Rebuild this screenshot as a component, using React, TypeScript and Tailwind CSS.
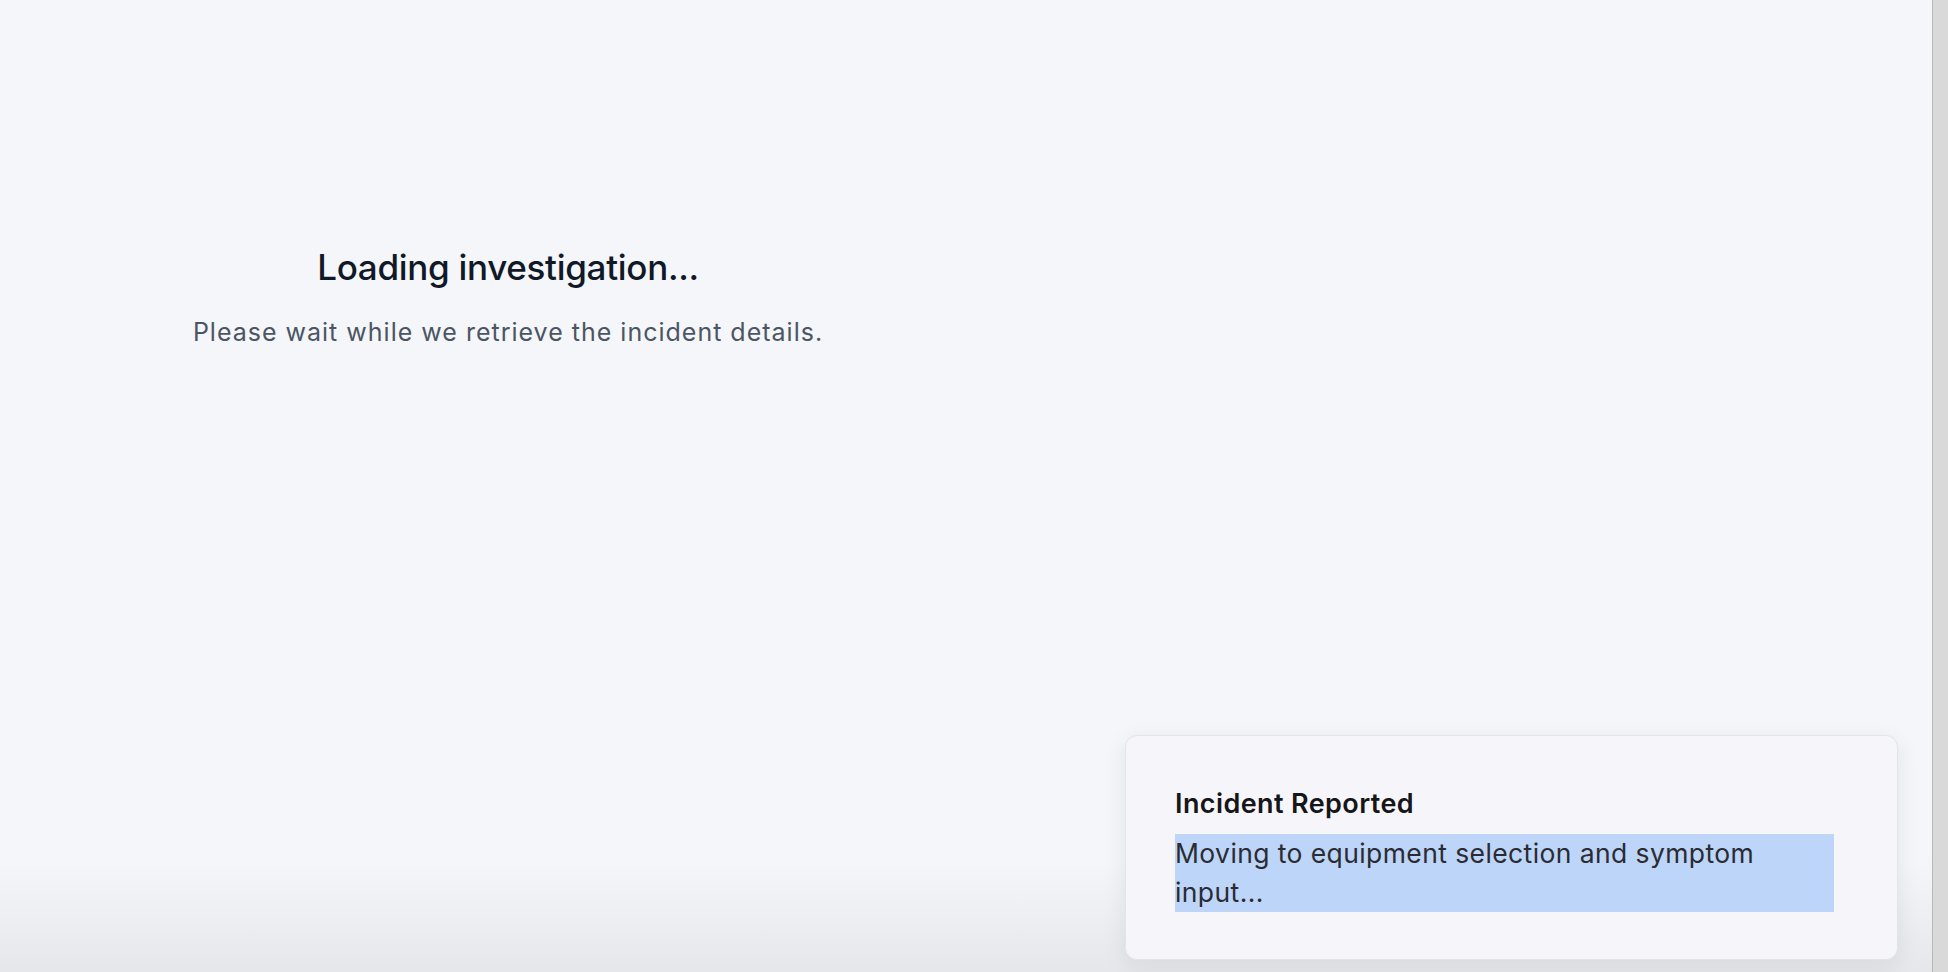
import React from "react";

export default function App() {
  return (
    <div
      className="flex h-[972px] w-[1948px] overflow-hidden bg-[#f4f6f9]"
      style={{ fontFamily: "Inter, 'Noto Sans', sans-serif" }}
    >
      <main className="relative flex-1 bg-[#f4f6f9]">
        <div className="relative z-10 flex w-[1016px] flex-col items-center pt-[247px]">
          <h1 className="text-[35px] leading-[40px] font-medium tracking-[-0.3px] text-[#111827]">
            Loading investigation...
          </h1>
          <p className="mt-[29px] text-[25px] leading-[32px] tracking-[1px] text-[#4b5563]">
            Please wait while we retrieve the incident details.
          </p>
        </div>

        <div className="pointer-events-none absolute inset-x-0 bottom-0 h-[110px] bg-gradient-to-b from-[#f4f6f9]/0 to-[#e6e7ea]" />

        <div className="absolute bottom-[12px] right-[34px] z-20 w-[773px] rounded-[12px] border border-[#e1e4ea] bg-[#f6f6fa] pt-[50px] pb-[47px] pl-[49px] pr-[63px] shadow-[0_6px_24px_rgba(15,23,42,0.08)]">
          <div className="text-[27px] leading-[36px] font-semibold tracking-[0.4px] text-[#16161a]">
            Incident Reported
          </div>
          <div className="mt-[12px] bg-[#bcd5f9] text-[26.5px] leading-[39px] tracking-[0.4px] text-[#2b2b31]">
            Moving to equipment selection and symptom input...
          </div>
        </div>
      </main>
      <div className="w-[16px] border-l border-[#b9b9b9] bg-[#d9d9d9]" />
    </div>
  );
}
